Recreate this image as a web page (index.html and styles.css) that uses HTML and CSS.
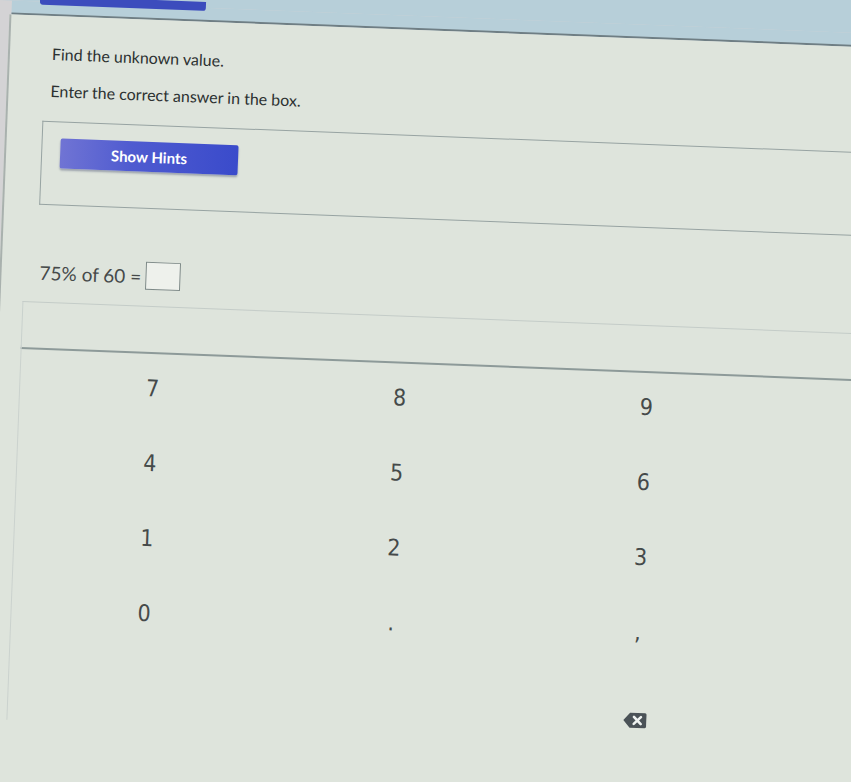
FILE: index.html
```html
<!DOCTYPE html>
<html>
<head>
<meta charset="utf-8">
<link rel="stylesheet" href="styles.css">
</head>
<body>
<div class="screen">
  <div class="topbar"><div class="tab"></div></div>
  <div class="panel">
    <p class="prompt first">Find the unknown value.</p>
    <p class="prompt second">Enter the correct answer in the box.</p>
    <div class="hints">
      <button class="hint-btn">Show Hints</button>
    </div>
    <div class="question">
      <span class="expr">75% of 60 =</span>
      <span class="answer-box"></span>
    </div>
    <div class="answer-bar"></div>
    <div class="keypad">
      <div class="key">7</div>
      <div class="key">8</div>
      <div class="key">9</div>
      <div class="key">4</div>
      <div class="key">5</div>
      <div class="key">6</div>
      <div class="key">1</div>
      <div class="key">2</div>
      <div class="key">3</div>
      <div class="key">0</div>
      <div class="key">.</div>
      <div class="key">,</div>
      <div class="key"></div>
      <div class="key"></div>
      <div class="key back">
        <svg width="24" height="17" viewBox="0 0 24 17">
          <path d="M7 1 H22 a1.5 1.5 0 0 1 1.5 1.5 V14.5 a1.5 1.5 0 0 1 -1.5 1.5 H7 L0.5 8.5 Z" fill="#4a5257"/>
          <path d="M11 5 L18 12 M18 5 L11 12" stroke="#eef2f0" stroke-width="2.6" stroke-linecap="round"/>
        </svg>
      </div>
    </div>
  </div>
</div>
</body>
</html>
```
FILE: styles.css
```css
html, body {
  margin: 0;
  padding: 0;
  overflow: hidden;
  background: #b7cfd9;
  width: 851px;
  height: 782px;
}

.screen {
  width: 920px;
  height: 860px;
  transform: rotate(2.2deg);
  transform-origin: 0 0;
  background: #d4d3d5;
  font-family: Lato, "Open Sans", sans-serif;
  color: #2c3131;
}

.topbar {
  margin-left: 12px;
  height: 12px;
  background: #b7cfd9;
  border-bottom: 2px solid #6f7e84;
  padding-left: 28px;
}

.tab {
  width: 166px;
  height: 9px;
  transform: translateY(-6px);
  background: #3c4cbd;
  border-radius: 0 0 3px 3px;
}

.panel {
  margin-left: 10px;
  border-left: 2px solid #a9b1ae;
  height: 846px;
  background: #dee4dc;
}

.prompt {
  margin: 0;
  font-size: 16px;
  line-height: 20px;
  padding-left: 42px;
}

.prompt.first {
  padding-top: 28px;
}

.prompt.second {
  padding-top: 17px;
}

.hints {
  margin: 20px 0 0 35px;
  height: 84px;
  border: 1px solid #97a3a2;
  border-right: none;
  padding: 16px 0 0 18px;
  box-sizing: border-box;
}

.hint-btn {
  width: 178px;
  height: 30px;
  border: none;
  border-radius: 2px;
  background: linear-gradient(90deg, #7074d4 0%, #4f5bd0 40%, #3a4bcb 100%);
  color: #ffffff;
  font-family: Lato, sans-serif;
  font-size: 15px;
  font-weight: 700;
  box-shadow: 0 2px 2px rgba(40, 50, 90, 0.35);
}

.question {
  margin: 52px 0 0 38px;
  display: flex;
  align-items: center;
  gap: 4px;
  height: 30px;
}

.expr {
  font-family: Lato, sans-serif;
  font-size: 19px;
  color: #464a4a;
}

.answer-box {
  width: 33px;
  height: 26px;
  border: 1.5px solid #7e8a88;
  background: #eef1ec;
}

.answer-bar {
  margin: 15px 0 0 22px;
  height: 45px;
  border-top: 1px solid #c4ccc8;
  border-left: 1px solid #c9d1cd;
  border-bottom: 2px solid #8d9a99;
}

.keypad {
  margin: -4px 0 0 22px;
  border-left: 1px solid #cbd2ce;
  padding-left: 9px;
  display: grid;
  grid-template-columns: 247px 247px 247px;
  grid-auto-rows: 75px;
}

.key {
  display: flex;
  align-items: center;
  justify-content: center;
  font-family: "Liberation Sans Narrow", "DejaVu Sans Condensed", "Liberation Sans", sans-serif;
  font-size: 23px;
  color: #454a4a;
}

.back {
  padding-top: 28px;
}
```
